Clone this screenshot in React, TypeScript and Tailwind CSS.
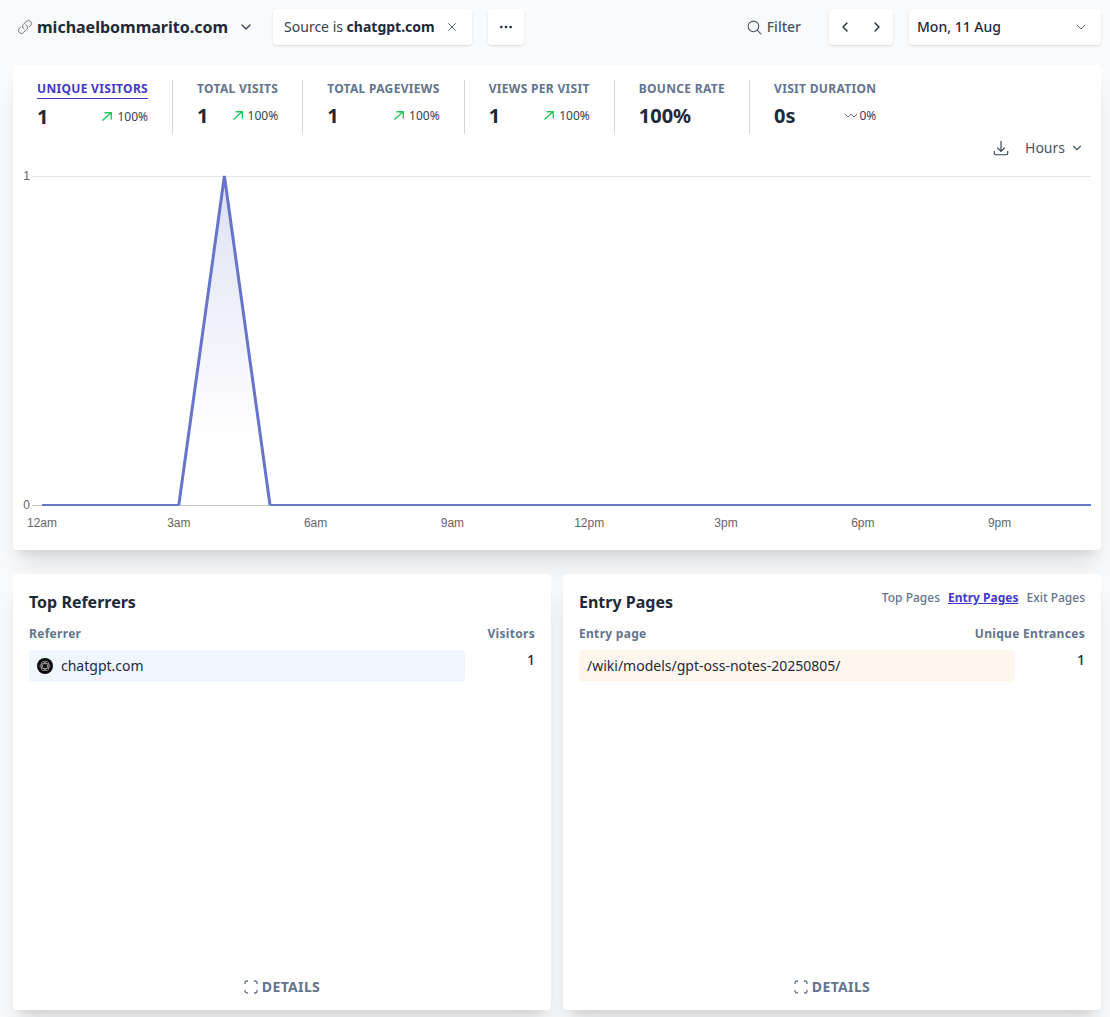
import { ChevronDown, ChevronLeft, ChevronRight, MoreHorizontal, X } from 'lucide-react';
import { HiOutlineArrowDownTray, HiOutlineLink, HiOutlineMagnifyingGlass } from 'react-icons/hi2';

const stats = [
  { label: 'Unique visitors', value: '1', change: '100%', active: true },
  { label: 'Total visits', value: '1', change: '100%' },
  { label: 'Total pageviews', value: '1', change: '100%' },
  { label: 'Views per visit', value: '1', change: '100%' },
  { label: 'Bounce rate', value: '100%' },
  { label: 'Visit duration', value: '0s', change: '0%', flat: true },
];

const hours = ['12am', '3am', '6am', '9am', '12pm', '3pm', '6pm', '9pm'];

function Stat({ s, last }: { s: (typeof stats)[number]; last: boolean }) {
  return (
    <div className={`px-6 h-[54px] ${last ? '' : 'border-r border-gray-300'}`}>
      <div className="flex">
        <div className={`text-xs font-bold uppercase tracking-[0.315px] leading-[18px] whitespace-nowrap ${s.active ? 'text-[#4338ca] border-b border-[#4338ca]' : 'text-slate-500'}`}>
          {s.label}
        </div>
      </div>
      <div className="flex items-center justify-between mt-1 h-7">
        <span className="text-xl font-bold text-gray-800">{s.value}</span>
        {s.change && (
          <span className="flex items-center text-xs text-gray-700 -mt-[1px]">
            {s.flat ? (
              <svg className="w-[14px] h-2 mr-[1px] text-gray-500" viewBox="0 0 14 8" fill="none" stroke="currentColor" strokeWidth="1">
                <path d="M1 2l3 3 3-3 3 3 3-3" />
              </svg>
            ) : (
              <svg className="w-[10px] h-[9px] mr-[5px] text-[#22c55e]" viewBox="0 0 10 9" fill="none" stroke="currentColor" strokeWidth="1.4">
                <path d="M.5 8.500L9 .7M2.500.7H9.300V7.500" />
              </svg>
            )}
            {s.change}
          </span>
        )}
      </div>
    </div>
  );
}

function Chart() {
  const x = (h: number) => 42 + h * 45.6;
  return (
    <svg className="block w-[1088px] h-[376px] mt-[7px]" viewBox="13 165 1088 376">
      <defs>
        <linearGradient id="peak" x1="0" y1="0" x2="0" y2="1">
          <stop offset="0%" stopColor="#6674cc" stopOpacity="0.22" />
          <stop offset="80%" stopColor="#6674cc" stopOpacity="0" />
        </linearGradient>
      </defs>
      <line x1="32" x2="1091" y1="176.5" y2="176.5" stroke="#e5e5e5" />
      <line x1="32" x2="1091" y1="505.5" y2="505.5" stroke="#c8c8c8" />
      <text x="30" y="180" textAnchor="end" fontSize="12" fill="#666" fontFamily="'Liberation Sans', sans-serif">1</text>
      <text x="30" y="509" textAnchor="end" fontSize="12" fill="#666" fontFamily="'Liberation Sans', sans-serif">0</text>
      {hours.map((h, i) => (
        <text key={h} x={x(i * 3)} y="527" textAnchor="middle" fontSize="12" fill="#666" fontFamily="'Liberation Sans', sans-serif">
          {h}
        </text>
      ))}
      <path d={`M${x(3)} 505L${x(4)} 176L${x(5)} 505Z`} fill="url(#peak)" />
      {/* baseline reads thinner than the slopes */}
      <path d={`M42 505H${x(3)}M${x(5)} 505H1091`} fill="none" stroke="#6674cc" strokeWidth="2" />
      <path d={`M${x(3)} 505L${x(4)} 176L${x(5)} 505`} fill="none" stroke="#6674cc" strokeWidth="3" strokeLinejoin="miter" />
    </svg>
  );
}

function DetailsIcon() {
  return (
    <svg className="w-[14px] h-[14px] text-slate-500" viewBox="0 0 14 14" fill="none" stroke="currentColor" strokeWidth="1.3">
      <path d="M1 4V3a2 2 0 0 1 2-2h1M10 1h1a2 2 0 0 1 2 2v1M13 10v1a2 2 0 0 1-2 2h-1M4 13H3a2 2 0 0 1-2-2v-1" />
    </svg>
  );
}

function ChatGptIcon() {
  return (
    <svg className="w-4 h-4 shrink-0" viewBox="0 0 16 16" fill="none">
      <circle cx="8" cy="8" r="8" fill="#0b0b0b" />
      <g stroke="#b5b5b5" strokeWidth="0.7">
        <ellipse cx="8" cy="8" rx="5" ry="2.600" />
        <ellipse cx="8" cy="8" rx="5" ry="2.600" transform="rotate(60 8 8)" />
        <ellipse cx="8" cy="8" rx="5" ry="2.600" transform="rotate(120 8 8)" />
      </g>
    </svg>
  );
}

function Panel({
  title,
  tabs,
  col,
  valueCol,
  rowClass,
  row,
}: {
  title: string;
  tabs?: boolean;
  col: string;
  valueCol: string;
  rowClass: string;
  row: React.ReactNode;
}) {
  return (
    <div className="bg-white rounded shadow-xl h-[436px] px-4 pt-4 pb-[13px] flex flex-col">
      <div className="flex justify-between h-6">
        <h3 className="font-bold text-gray-800 text-base leading-6">{title}</h3>
        {tabs && (
          <div className="flex gap-2 text-xs font-medium text-slate-500 leading-4">
            <span>Top Pages</span>
            <span className="font-bold text-[#4338ca] underline">Entry Pages</span>
            <span>Exit Pages</span>
          </div>
        )}
      </div>
      <div className="flex justify-between text-xs font-bold tracking-wide text-slate-500 mt-3 leading-4">
        <span>{col}</span>
        <span>{valueCol}</span>
      </div>
      <div className="flex justify-between mt-2">
        <div className={`w-[436px] h-8 rounded-sm flex items-center px-2 text-sm text-gray-800 ${rowClass}`}>{row}</div>
        <span className="text-sm font-medium text-gray-800 leading-5">1</span>
      </div>
      <div className="mt-auto flex items-center justify-center gap-1 text-sm leading-5 font-bold text-slate-500 tracking-wide">
        <DetailsIcon />
        DETAILS
      </div>
    </div>
  );
}

export default function App() {
  return (
    <div className="w-[1110px] h-[1017px] overflow-hidden bg-gray-50 px-[13px] pt-[9px] pr-[9px] font-['Noto_Sans',sans-serif]">
      <header className="flex items-center h-9">
        <HiOutlineLink className="ml-1 text-gray-500" size={16} />
        <span className="ml-1 text-base font-bold text-gray-800">michaelbommarito.com</span>
        <ChevronDown className="w-4 h-4 ml-[10px] text-gray-700" />
        <div className="ml-[19px] h-9 w-[199px] bg-white rounded shadow-sm flex items-center pl-[11px] pr-[13px] text-sm text-gray-700">
          <span>
            Source is <b className="text-gray-800">chatgpt.com</b>
          </span>
          <X className="w-[14px] h-[14px] ml-auto text-gray-600" strokeWidth={1.5} />
        </div>
        <div className="ml-4 h-9 w-9 bg-white rounded shadow-sm flex items-center justify-center text-gray-800">
          <MoreHorizontal className="w-4 h-4" />
        </div>
        <div className="ml-auto flex items-center text-sm font-medium text-gray-600">
          <HiOutlineMagnifyingGlass className="mr-1" size={17} />
          Filter
        </div>
        <div className="ml-7 h-9 w-16 bg-white rounded shadow-sm flex items-center justify-around text-gray-800">
          <ChevronLeft className="w-4 h-4" />
          <ChevronRight className="w-4 h-4" />
        </div>
        <div className="ml-4 h-9 w-[192px] bg-white rounded shadow-sm flex items-center justify-between pl-2 pr-3 text-sm font-medium text-gray-800">
          Mon, 11 Aug
          <ChevronDown className="w-4 h-4 text-gray-500" strokeWidth={1.5} />
        </div>
      </header>

      <section className="mt-5 bg-white rounded shadow-xl h-[485px] pt-[15px]">
        <div className="flex">
          {stats.map((s, i) => (
            <Stat key={s.label} s={s} last={i === stats.length - 1} />
          ))}
        </div>
        <div className="flex items-center justify-end h-5 mt-[4px] pr-[17px] text-sm text-gray-600">
          <HiOutlineArrowDownTray className="mr-[15px] text-gray-700" size={18} />
          Hours
          <ChevronDown className="w-[14px] h-[14px] ml-[5px]" />
        </div>
        <Chart />
      </section>

      <div className="mt-6 grid grid-cols-2 gap-3">
        <Panel
          title="Top Referrers"
          col="Referrer"
          valueCol="Visitors"
          rowClass="bg-blue-50"
          row={
            <>
              <ChatGptIcon />
              <span className="ml-2">chatgpt.com</span>
            </>
          }
        />
        <Panel
          title="Entry Pages"
          tabs
          col="Entry page"
          valueCol="Unique Entrances"
          rowClass="bg-orange-50"
          row="/wiki/models/gpt-oss-notes-20250805/"
        />
      </div>
    </div>
  );
}
